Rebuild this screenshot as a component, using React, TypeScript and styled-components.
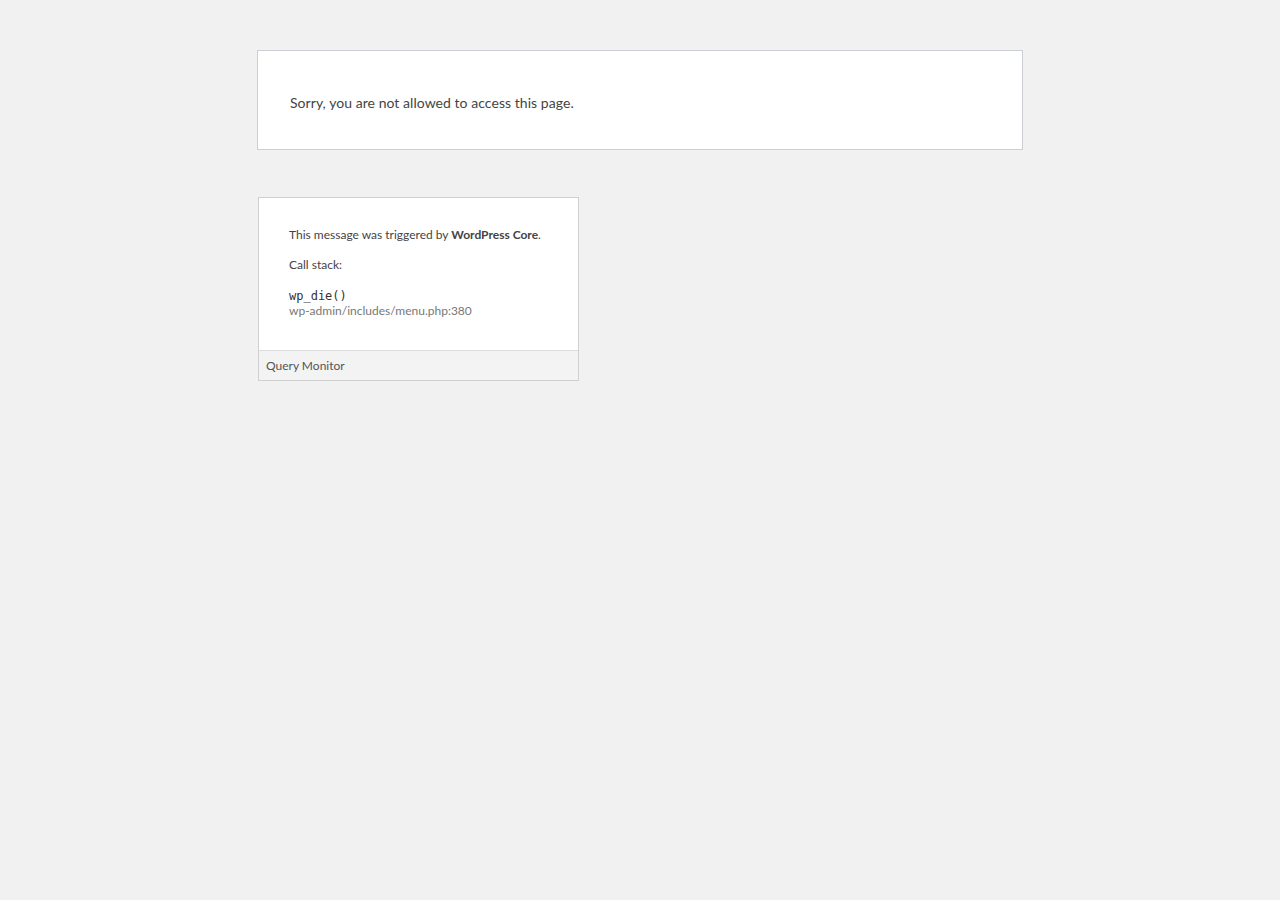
import React from 'react'
import styled, { createGlobalStyle } from 'styled-components'

const GlobalStyle = createGlobalStyle`
  html, body {
    margin: 0;
    padding: 0;
    background: #f1f1f1;
  }
  body {
    font-family: Lato, "Open Sans", sans-serif;
    color: #444;
  }
`

const Page = styled.div`
  width: 766px;
  margin: 0 auto;
  padding-top: 50px;
`

const ErrorBox = styled.div`
  background: #fff;
  border: 1px solid #ccd0d4;
  padding: 16px 32px;
  p {
    margin: 25px 0 20px;
    font-size: 14px;
    line-height: 21px;
    letter-spacing: 0.05px;
    color: #444;
  }
`

const QMBox = styled.div`
  width: 319px;
  margin: 47px 0 0 1px;
  background: #fff;
  border: 1px solid #d0d0d0;
  font-size: 12px;
  color: #444;
`

const QMContent = styled.div`
  padding: 28px 30px 31px;
`

const QMLine = styled.p<{ $last?: boolean }>`
  margin: 0 0 ${(p) => (p.$last ? 0 : 12)}px;
  line-height: 18px;
  strong {
    font-weight: 700;
    color: #444;
  }
`

const Fn = styled.code`
  display: block;
  margin-top: 15px;
  font-family: "DejaVu Sans Mono", "Liberation Mono", monospace;
  font-size: 12px;
  line-height: 14px;
  color: #333;
`

const FilePath = styled.div`
  line-height: 16px;
  color: #777;
`

const QMFooter = styled.div`
  background: #f3f3f3;
  border-top: 1px solid #dcdcdc;
  padding: 0 7px;
  line-height: 29px;
  color: #555;
`

export default function App() {
  return (
    <>
      <GlobalStyle />
      <Page>
        <ErrorBox>
          <p>Sorry, you are not allowed to access this page.</p>
        </ErrorBox>
        <QMBox>
          <QMContent>
            <QMLine>
              This message was triggered by <strong>WordPress Core</strong>.
            </QMLine>
            <QMLine $last>Call stack:</QMLine>
            <Fn>wp_die()</Fn>
            <FilePath>wp-admin/includes/menu.php:380</FilePath>
          </QMContent>
          <QMFooter>Query Monitor</QMFooter>
        </QMBox>
      </Page>
    </>
  )
}
